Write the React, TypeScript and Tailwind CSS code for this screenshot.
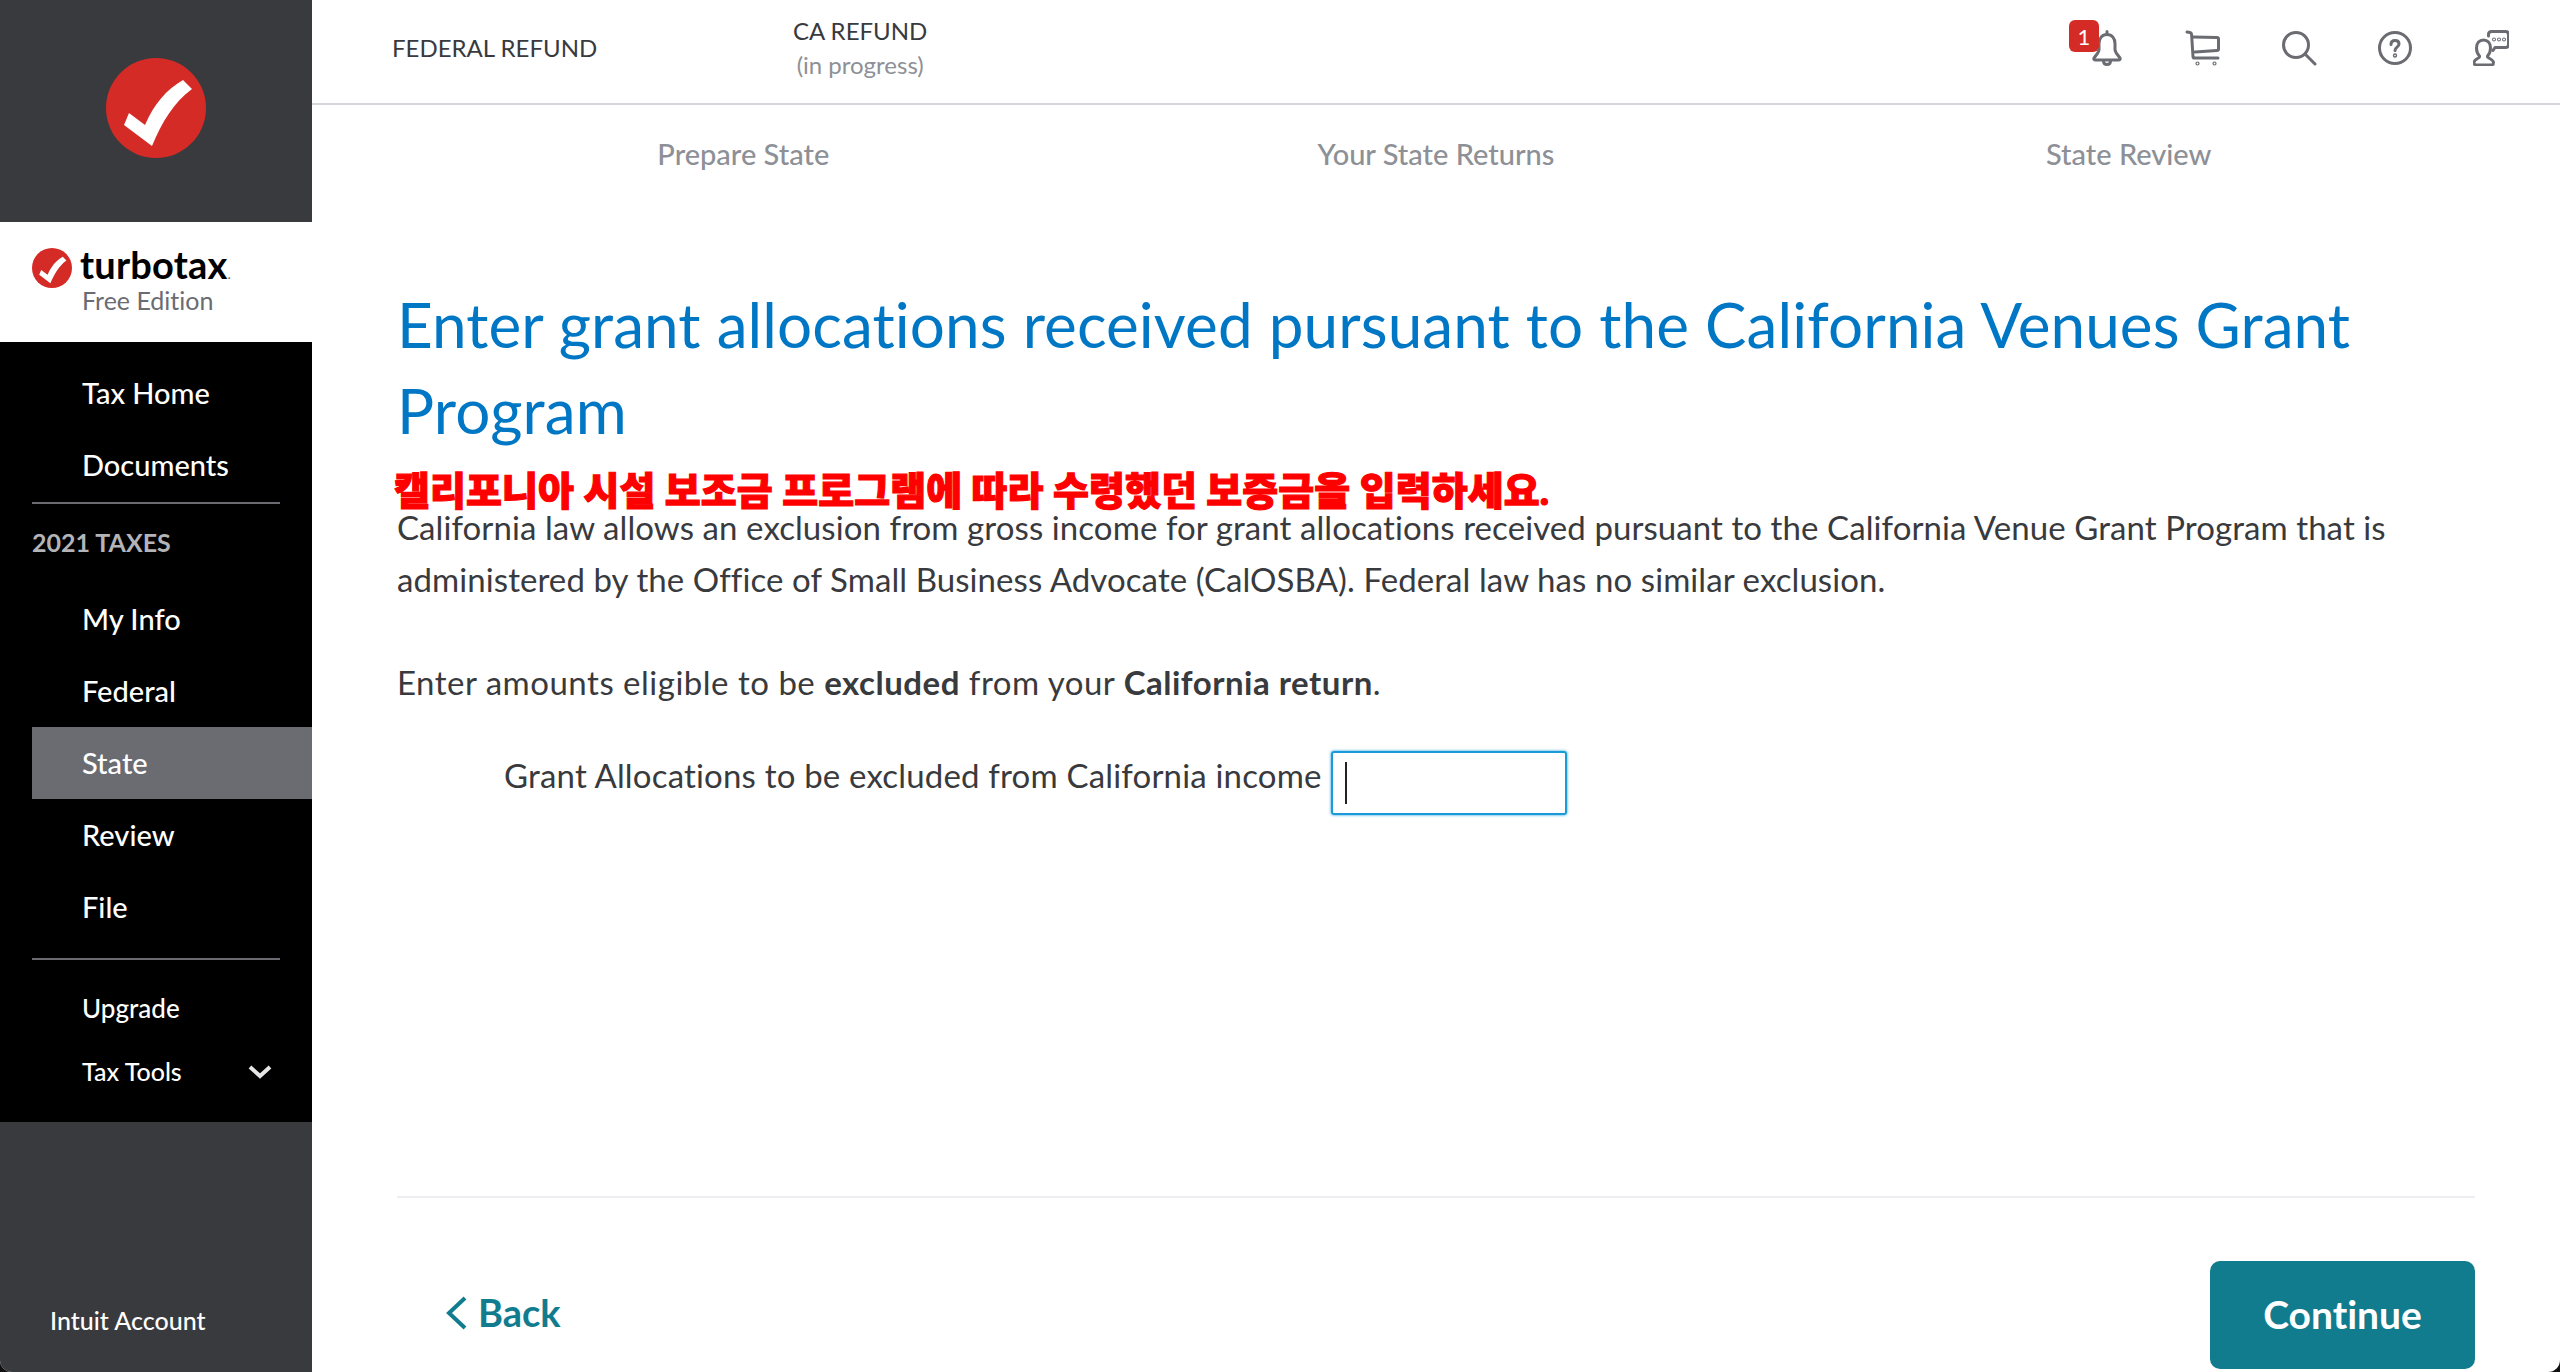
const navTop = ["Tax Home", "Documents"]
const navTaxes = ["My Info", "Federal", "State", "Review", "File"]

function CheckMark({ size, className }: { size: number; className?: string }) {
  return (
    <svg width={size} height={size} viewBox="0 0 100 100" className={`shrink-0 ${className ?? ""}`}>
      <circle cx="50" cy="50" r="50" fill="#d52b27" />
      <path d="M18 67 L23 55 L39 67 C48 46 60 32 77 22 L86 31 C68 44 56 64 46 88 Z" fill="#fff" />
    </svg>
  )
}

function NavItem({ label, active }: { label: string; active?: boolean }) {
  return (
    <div className={`flex h-[72px] items-center pl-[50px] ${active ? "bg-[#6b6c72]" : ""}`}>
      <span className="text-[29px] font-medium text-white">{label}</span>
    </div>
  )
}

function Sidebar() {
  return (
    <aside className="flex h-full w-[312px] shrink-0 flex-col bg-[#393a3d] text-white">
      {/* Logo block */}
      <div className="flex h-[222px] items-start justify-center pt-[58px]">
        <CheckMark size={100} />
      </div>
      <div className="h-[120px] bg-white pl-[32px] pt-[22px]">
        <div className="flex items-center gap-[8px]">
          <CheckMark size={40} className="-mt-[3px]" />
          <span className="text-[38px] font-bold leading-[40px] tracking-[0.2px] text-black">
            turbotax<span className="text-[12px] text-[#6b6c72]">.</span>
          </span>
        </div>
        <div className="ml-[50px] -mt-[9px] text-[25px] leading-[28px] text-[#6b6c72]">Free Edition</div>
      </div>

      {/* Main nav */}
      <nav className="flex h-[780px] flex-col bg-black px-[32px] pt-[15px]">
        <div className="-mr-[32px]">
          {navTop.map((n) => (
            <NavItem key={n} label={n} />
          ))}
        </div>
        <div className="mt-[1px] h-[2px] bg-[#6b6c72]" />
        <div className="flex h-[78px] items-center text-[25px] font-bold text-[#b3b4b8]">2021 TAXES</div>
        <div className="-mr-[32px] mt-[1px]">
          {navTaxes.map((n) => (
            <NavItem key={n} label={n} active={n === "State"} />
          ))}
        </div>
        <div className="mt-[15px] h-[2px] bg-[#6b6c72]" />
        <div className="flex h-[96px] items-center pl-[50px] text-[26px] font-medium">Upgrade</div>
        <div className="-mt-[16px] flex h-[64px] items-center justify-between pl-[50px] pr-[8px] text-[25px] font-medium">
          Tax Tools
          <svg width="24" height="14" viewBox="0 0 24 14" fill="none" stroke="#e6e6e8" strokeWidth="4">
            <path d="M2 2 L12 11 L22 2" />
          </svg>
        </div>
      </nav>

      <div className="mt-auto pb-[38px] pl-[50px] text-[25px] font-medium leading-[28px]">Intuit Account</div>
    </aside>
  )
}

function HeaderIcons() {
  const cls = "h-[36px] w-[36px]"
  const stroke = { fill: "none", stroke: "#6b6c72", strokeWidth: 3, strokeLinecap: "round" as const, strokeLinejoin: "round" as const }
  return (
    <div className="flex items-center gap-[60px] pr-[51px]">
      <div className="relative">
        <div className="absolute -left-[20px] -top-[10px] flex h-[32px] w-[30px] items-center justify-center rounded-[6px] bg-[#d52b27] text-[22px] text-white">
          1
        </div>
        <svg viewBox="0 0 36 36" className={cls} {...stroke}>
          <path d="M18 1.500v3M18 4.500c-5 0-8 4-8 9v6c0 3-3 5.500-5 8.500-.6 1 0 2 1 2h24c1 0 1.600-1 1-2-2-3-5-5.500-5-8.500v-6c0-5-3-9-8-9z" />
          <path d="M14.500 31c0 2.500 1.500 3.500 3.500 3.500s3.500-1 3.500-3.500" />
        </svg>
      </div>
      <svg viewBox="0 0 36 36" className={cls} {...stroke}>
        <path d="M2 2l3 .5c1 .2 1.500 1 1.600 2l1.400 22c.1 1 .7 1.500 1.600 1.500H33" />
        <path d="M8 7l24 .5c1 0 1.500.5 1.500 1.500v10c0 1-.5 1.500-1.500 1.500L10 22" />
        <circle cx="12.500" cy="33.500" r=".6" />
        <circle cx="29.500" cy="33.500" r=".6" />
      </svg>
      <svg viewBox="0 0 36 36" className={cls} {...stroke}>
        <circle cx="15" cy="15" r="12.500" />
        <path d="M24.500 24.500L34 34" />
      </svg>
      <svg viewBox="0 0 36 36" className={cls} {...stroke}>
        <circle cx="18" cy="18" r="15.500" />
        <path d="M14 14.500c0-3 2-4 4-4s4 1 4 3.500c0 3.200-4 3.200-4 6.500" />
        <circle cx="18" cy="25.500" r=".7" />
      </svg>
      <svg viewBox="0 0 36 36" className={cls} {...stroke}>
        <path d="M15.500 6V4.500c0-2 1-3 3-3h14c2 0 3 1 3 3v10c0 2-1 3-3 3H22l-2 3" />
        <path d="M6.500 26c-2-2-3-5-3-8 0-5 3-8 7-8s7 3 7 8c0 3-1 6-3 8v1c0 1 5 2 6 5 0 2-1 3-2 3H3c-2 0-2-2-2-3 1-3 5.500-4 5.500-5z" />
        <circle cx="21" cy="9.500" r=".5" />
        <circle cx="26" cy="9.500" r=".5" />
        <circle cx="31" cy="9.500" r=".5" />
      </svg>
    </div>
  )
}

export default function App() {
  return (
    <div className="h-screen w-full overflow-hidden bg-[#111] font-['Lato','Noto_Sans_CJK_KR',sans-serif] [font-variant-ligatures:none]">
      <div className="flex h-full overflow-hidden rounded-b-[12px] bg-white">
        <Sidebar />
        <main className="flex h-full min-w-0 flex-1 flex-col">
          {/* Top bar */}
          <header className="flex h-[105px] shrink-0 items-center justify-between border-b-[2px] border-[#d4d7dc] pb-[7px] pl-[80px]">
            <div className="flex items-center">
              <div className="w-[401px] text-[24px] text-[#393a3d]">FEDERAL REFUND</div>
              <div className="text-center text-[24px] leading-[34px]">
                <div className="text-[#393a3d]">CA REFUND</div>
                <div className="text-[#8d9096]">(in progress)</div>
              </div>
            </div>
            <HeaderIcons />
          </header>

          <div className="flex min-h-0 flex-1 flex-col px-[85px]">
            {/* Steps */}
            <div className="grid h-[98px] shrink-0 grid-cols-3 items-center text-center text-[29px] font-medium text-[#8d9096]">
              <div>Prepare State</div>
              <div>Your State Returns</div>
              <div>State Review</div>
            </div>

            <h1 className="mt-[78px] text-[62px] font-normal leading-[86px] tracking-[0.1px] text-[#0077c5]">
              Enter grant allocations received pursuant to the California Venues Grant Program
            </h1>
            <div className="-ml-[3px] mt-[25px] h-[24px] text-[39px] font-black leading-[24px] tracking-[0.12px] text-[#ff0000] [-webkit-text-stroke:1.2px_#ff0000]">
              캘리포니아 시설 보조금 프로그램에 따라 수령했던 보증금을 입력하세요.
            </div>
            <p className="-mt-[1px] text-[33px] leading-[52px] tracking-[0.08px] text-[#393a3d]">
              California law allows an exclusion from gross income for grant allocations received pursuant to the California Venue Grant Program that is administered by the Office of Small Business Advocate (CalOSBA). Federal law has no similar exclusion.
            </p>
            <p className="mt-[51px] text-[33px] leading-[52px] tracking-[0.5px] text-[#393a3d]">
              Enter amounts eligible to be <b>excluded</b> from your <b>California return</b>.
            </p>

            <div className="mt-[43px] flex items-center pl-[107px]">
              <label className="pb-[14px] text-[33px] tracking-[0.18px] text-[#393a3d]">
                Grant Allocations to be excluded from California income
              </label>
              <div className="ml-[9px] flex h-[64px] w-[236px] items-center rounded-[3px] border-[2px] border-[#1a9ad9] pl-[12px] shadow-[0_0_3px_#1a9ad9]">
                <div className="h-[42px] w-[2px] bg-[#222]" />
              </div>
            </div>

            {/* Footer */}
            <div className="mt-auto flex h-[176px] shrink-0 items-end justify-between border-t-[2px] border-[#eceef1] pb-[3px]">
              <button className="mb-[28px] ml-[48px] flex items-center gap-[11px] text-[38px] font-bold text-[#127c8f]">
                <svg width="22" height="34" viewBox="0 0 22 34" fill="none" stroke="#127c8f" strokeWidth="4">
                  <path d="M20 2 L4 17 L20 32" />
                </svg>
                Back
              </button>
              <button className="flex h-[108px] w-[265px] items-center justify-center rounded-[10px] bg-[#127c8f] pb-[2px] text-[39px] font-bold text-white">
                Continue
              </button>
            </div>
          </div>
        </main>
      </div>
    </div>
  )
}
